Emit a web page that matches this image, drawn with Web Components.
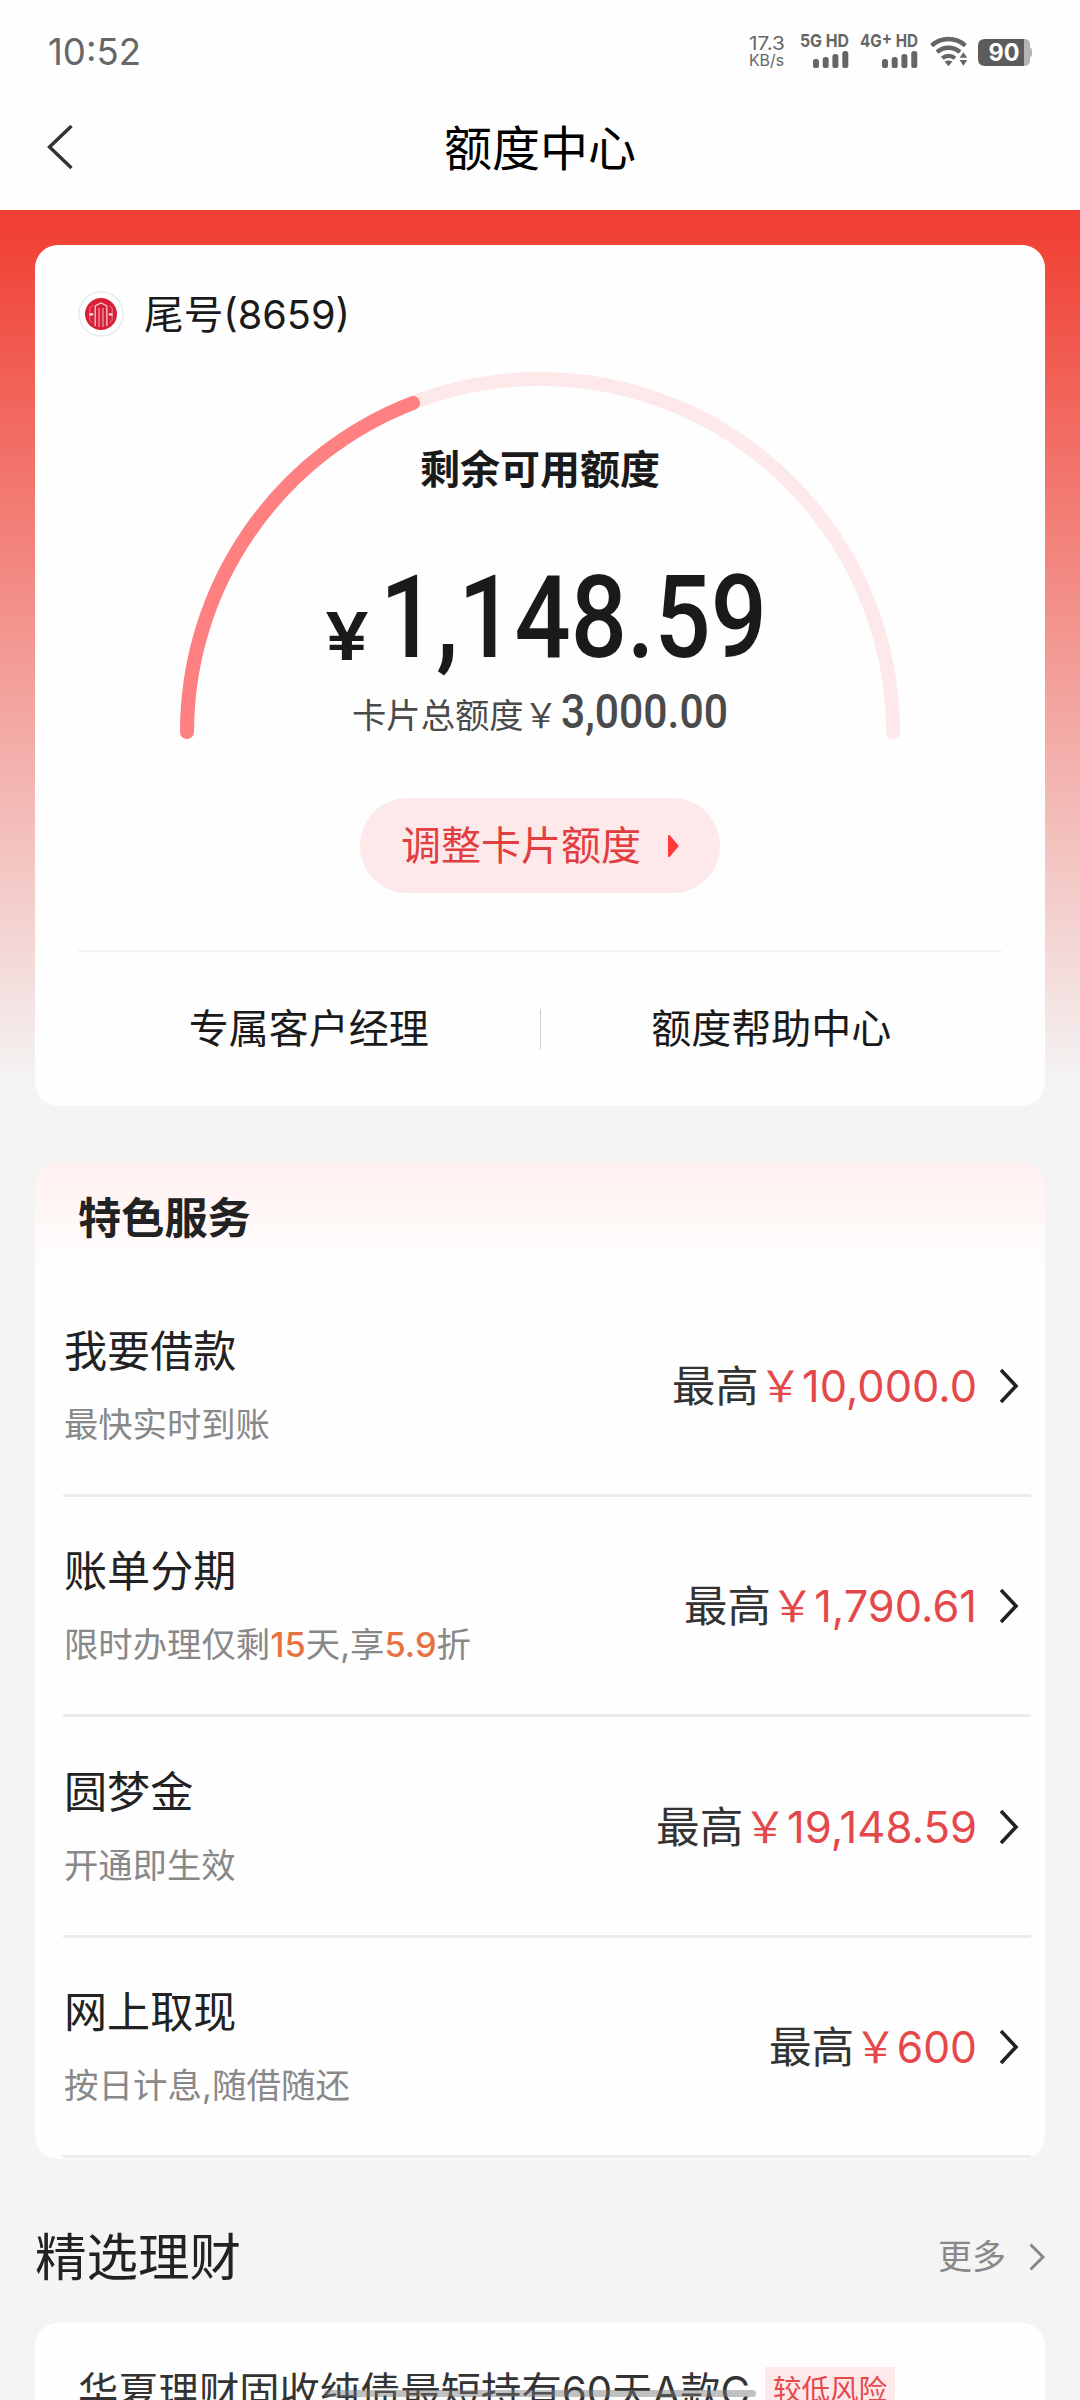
<!DOCTYPE html>
<html lang="zh-CN">
<head>
<meta charset="utf-8">
<title>额度中心</title>
<style>
html,body{margin:0;padding:0}
body{width:1080px;height:2400px;overflow:hidden;background:#f4f4f4;font-family:Inter,"Noto Sans CJK SC",sans-serif;color:#222}
</style>
</head>
<body>
<quota-page></quota-page>
<script>
const define = (name, html, setup) => {
  const tpl = document.createElement('template');
  tpl.innerHTML = html;
  customElements.define(name, class extends HTMLElement {
    connectedCallback() {
      if (this.shadowRoot) return;
      const root = this.attachShadow({mode: 'open'});
      root.appendChild(tpl.content.cloneNode(true));
      if (setup) setup(this, root);
    }
  });
};

/* One line of text condensed or expanded to a given advance width */
define('fit-line', `
<style>
:host{display:block;white-space:nowrap;flex:none}
span{display:inline-block;transform-origin:0 50%;white-space:nowrap}
</style><span><slot></slot></span>`, (el, root) => {
  const span = root.querySelector('span');
  el.fit = () => {
    const w = parseFloat(el.getAttribute('w'));
    if (!w) return;
    el.style.width = w + 'px';
    span.style.transform = 'none';
    const n = span.getBoundingClientRect().width;
    if (n) span.style.transform = 'scaleX(' + (w / n) + ')';
  };
  el.fit();
  addEventListener('load', el.fit);
});

define('signal-bars', `
<style>
:host{display:flex;flex-direction:column;align-items:flex-end;color:#666;gap:3px}
fit-line{font-weight:700;font-size:18px;line-height:14px;height:14px}
svg{display:block}
</style>
<fit-line><slot></slot></fit-line>
<svg width="36" height="17" fill="#666"><rect x="0" y="8" width="6" height="9" rx="2.6"/><rect x="9.7" y="6" width="6" height="11" rx="2.6"/><rect x="19.4" y="3" width="6" height="14" rx="2.6"/><rect x="29.3" y="0" width="6" height="17" rx="2.6"/></svg>`,
(el, root) => {
  const line = root.querySelector('fit-line');
  line.setAttribute('w', el.getAttribute('w'));
  line.fit();
});

define('status-bar', `
<style>
:host{display:flex;box-sizing:border-box;height:90px;padding:0 48px 0 48px;color:#666;align-items:flex-start}
.time{font-size:36.5px;line-height:44px;margin-top:30px}
.net{margin:35px 0 0 auto;display:flex;flex-direction:column}
.net fit-line:first-child{font-size:18.5px;line-height:17px}
.net fit-line:last-child{font-size:16.5px;line-height:16px}
.s1{margin:34px 0 0 15px}.s2{margin:34px 0 0 11px}
.wifi{margin:36px 0 0 12px}
.bat{margin:39px 0 0 10px}
</style>
<fit-line class="time" w="93">10:52</fit-line>
<div class="net"><fit-line w="36">17.3</fit-line><fit-line w="35">KB/s</fit-line></div>
<signal-bars class="s1" w="49">5G HD</signal-bars>
<signal-bars class="s2" w="58">4G<span style="position:relative;top:-2px">+</span> HD</signal-bars>
<svg class="wifi" width="38" height="31" viewBox="0 0 38 31" fill="none" stroke="#666" stroke-width="4.4">
<path d="M1.6 9.6A25 25 0 0 1 35.4 9.6"/><path d="M7 16.2A17 17 0 0 1 30 16.2"/><path d="M12.3 22.2A9.6 9.6 0 0 1 25 22.2" stroke-width="4.2"/>
<path d="M14.6 25.5Q18.5 23.4 22.4 25.5L18.5 30.3Z" fill="#666" stroke="none"/>
<path d="M28.200 22.500L33.500 13.500L38 21V31H28.200Z" fill="#fefefe" stroke="none"/>
<path d="M29.600 21.800L33.400 16.200L37.200 21.800Z M29.600 24L33.400 29.800L37.200 24Z" fill="#666" stroke="none"/></svg>
<svg class="bat" width="54" height="27" viewBox="0 0 54 27">
<path d="M46 0h1a5 5 0 0 1 5 5v3.5q2 .6 2 2.5v5q0 1.900-2 2.500v3.500a5 5 0 0 1-5 5h-1z" fill="#b5b5b5"/>
<path d="M7 0H46V27H7Q0 27 0 20V7Q0 0 7 0Z" fill="#5c5c5c"/>
<text x="26" y="22.300" text-anchor="middle" textLength="31" lengthAdjust="spacingAndGlyphs" font-family="Inter" font-weight="700" font-size="24" fill="#fff">90</text></svg>`);

define('nav-bar', `
<style>
:host{display:grid;grid-template-columns:80px 1fr 80px;height:120px;align-items:center}
svg{display:block;margin:-7px 0 0 46px}
h1{margin:-3px 0 0;text-align:center;font-weight:400;font-size:48px;line-height:60px;color:#000}
</style>
<svg width="28" height="46" fill="none" stroke="#333" stroke-width="3.4"><path d="M25.500 2L3.500 23L25.500 44"/></svg>
<h1><slot></slot></h1>`);

define('bank-logo', `
<style>:host{display:block;width:46px;height:46px}svg{display:block}</style>
<svg width="46" height="46" viewBox="0 0 46 46"><circle cx="23" cy="23" r="22" fill="#fff" stroke="#e3edf1" stroke-width="1.5"/>
<circle cx="23" cy="23" r="16" fill="#d91f37"/>
<g fill="none"><path d="M17.200 35V15L23 12L28.800 15V35" stroke="#f6ccd2" stroke-width="1.300"/><path d="M21 36V17M25 36V17" stroke="#f0a0ab" stroke-width="1.200"/><path d="M14.500 14.500L11.800 17V29L14.500 32M31.500 14.500L34.200 17V29L31.500 32" stroke="#e8808e" stroke-width="1"/><path d="M11.500 23.300H15.200M30.800 23.300H34.500" stroke="#fbe3e6" stroke-width="2.200"/></g></svg>`);

define('quota-gauge', `
<style>
:host{display:grid;width:720px;height:380px;justify-items:center}
svg,.body{grid-area:1/1}
.body{display:flex;flex-direction:column;align-items:center;color:#1a1a1a}
h2{margin:81px 0 0;font-size:40px;font-weight:700;line-height:50px}
.big{display:flex;margin:73px 0 0 0;height:98px;align-items:center;gap:11px;padding-left:11px}
.yen{font-size:66px;font-weight:600;line-height:60px;margin-top:37px}
.num{font-family:Roboto;font-weight:500}
.big .num{font-size:115px;line-height:96px;margin-top:2px}
.total{display:flex;color:#4a4a4a;align-items:center;font-size:34.300px;line-height:36px;margin-top:30px;height:40px}
.total .num{font-size:49px;line-height:40px;margin:-8px 0 0 3px}
</style>
<svg width="720" height="380" viewBox="180 364 720 380" fill="none" stroke-width="14" stroke-linecap="round">
<path d="M187 732A353 353 0 0 1 893 732" stroke="#fde8ea"/><path d="M187 732A353 353 0 0 1 413 403" stroke="#ff8080"/></svg>
<div class="body"><h2>剩余可用额度</h2>
<div class="big"><fit-line class="yen" w="44">¥</fit-line><fit-line class="num" w="387">1,148.59</fit-line></div>
<div class="total"><fit-line w="206">卡片总额度￥</fit-line><fit-line class="num" w="167">3,000.00</fit-line></div></div>`);

define('pill-button', `
<style>
:host{display:flex;box-sizing:border-box;width:360px;height:95px;border-radius:48px;background:#fde8ea;color:#e23e40;font-size:40px;line-height:50px;align-items:center;padding-left:41px;gap:26px}
svg{display:block}
</style><span><slot></slot></span>
<svg width="13" height="24"><path d="M2 2L10.500 12L2 22Z" fill="#ff3838" stroke="#ff3838" stroke-width="2" stroke-linejoin="round"/></svg>`);

define('quota-card', `
<style>
:host{display:flex;flex-direction:column;align-items:center;box-sizing:border-box;height:861px;border-radius:23px;background:#fefefe}
.acct{align-self:stretch;display:flex;align-items:center;gap:20px;height:46px;padding:46px 0 0 43px;color:#1a1a1a}
.acct fit-line{font-size:40px;line-height:46px;margin-top:2px}
quota-gauge{margin-top:27px}
pill-button{margin-top:54px}
.links{display:grid;grid-template-columns:1fr 1px 1fr;align-items:center;width:924px;margin-top:57px;border-top:2px solid #f4f4f4;height:153px;text-align:center;font-size:40px;line-height:50px;color:#1a1a1a}
.links i{height:40px;background:#ccc}
</style>
<div class="acct"><bank-logo></bank-logo><fit-line w="206">尾号(8659)</fit-line></div>
<quota-gauge></quota-gauge>
<pill-button>调整卡片额度</pill-button>
<div class="links"><span>专属客户经理</span><i></i><span>额度帮助中心</span></div>`);

define('service-row', `
<style>
:host{display:flex;box-sizing:border-box;height:220.5px;border-bottom:3px solid #ececec;margin:0 14px 0 28px;align-items:flex-start}
.l{display:flex;flex-direction:column;flex:1;padding:47.500px 0 0 1px}
.t{font-size:43.100px;line-height:54px;color:#222}
.s{font-size:34.300px;line-height:44px;margin-top:25px;color:#888}
.r{display:flex;align-items:center;height:219px;font-size:43.200px;line-height:54px;color:#333}
svg{display:block;margin:0 12px 0 22px}
b{font-weight:400;color:#e5484b}
</style>
<div class="l"><div class="t"></div><div class="s"><slot></slot></div></div>
<div class="r"><fit-line>最高<b></b></fit-line><svg width="20" height="36" fill="none" stroke="#222" stroke-width="3.6"><path d="M2 2L17 18L2 34"/></svg></div>`,
(el, root) => {
  root.querySelector('.t').textContent = el.getAttribute('name');
  root.querySelector('b').textContent = '￥' + el.getAttribute('amount');
  const line = root.querySelector('fit-line');
  line.setAttribute('w', el.getAttribute('w'));
  line.fit();
});

define('service-card', `
<style>
:host{display:block;box-sizing:border-box;height:995.500px;margin-top:57px;border-radius:23px;background:linear-gradient(#fff1f0,#fff4f3 30px,#fefefe 105px);overflow:hidden}
h2{margin:0;height:113px;padding-left:43px;font-size:43.200px;line-height:111px;font-weight:700;color:#222}
em{font-style:normal;font-weight:500;color:#e6733f}
</style>
<h2>特色服务</h2>
<service-row name="我要借款" amount="10,000.0" w="305">最快实时到账</service-row>
<service-row name="账单分期" amount="1,790.61" w="293">
<fit-line w="407">限时办理仅剩<em>15</em>天,享<em>5.9</em>折</fit-line></service-row>
<service-row name="圆梦金" amount="19,148.59" w="321">开通即生效</service-row>
<service-row name="网上取现" amount="600" w="208"><fit-line w="286">按日计息,随借随还</fit-line></service-row>`);

define('section-head', `
<style>
:host{display:flex;align-items:center;height:164px;padding-top:33px;box-sizing:border-box}
h2{margin:0;flex:1;font-weight:400;font-size:51.500px;line-height:64px;color:#222}
span{font-size:34px;line-height:44px;color:#888}
svg{display:block;margin-left:23px}
</style><h2><slot></slot></h2><span>更多</span>
<svg width="16" height="28" fill="none" stroke="#888" stroke-width="3"><path d="M1.500 1.500L14 14L1.500 26.500"/></svg>`);

define('fund-card', `
<style>
:host{display:flex;align-items:flex-start;box-sizing:border-box;height:120px;border-radius:23px;background:#fefefe;padding:44px 0 0 43px;color:#333}
.n{font-size:40.300px;line-height:50px}
.tag{margin-left:15px;width:130px;height:60px;box-sizing:border-box;background:#fde8ea;color:#e5484d;font-size:28.500px;line-height:46px;text-align:center}
</style><fit-line class="n" w="672">华夏理财固收纯债最短持有60天A款C</fit-line><div class="tag">较低风险</div>`);

define('quota-page', `
<style>
:host{display:block;width:1080px;height:2400px;overflow:hidden;position:relative}
header{background:#fefefe;height:210px}
main{padding:35px 35px 0;background:linear-gradient(#f13e34,#f14236 25px,#f4f4f4 872px)}
.home{position:absolute;left:324px;top:2390px;width:432px;height:7px;border-radius:4px;background:rgba(120,120,120,.45)}
</style>
<header><status-bar></status-bar><nav-bar>额度中心</nav-bar></header>
<main><quota-card></quota-card><service-card></service-card><section-head>精选理财</section-head><fund-card></fund-card></main>
<div class="home"></div>`);
</script>
</body>
</html>
